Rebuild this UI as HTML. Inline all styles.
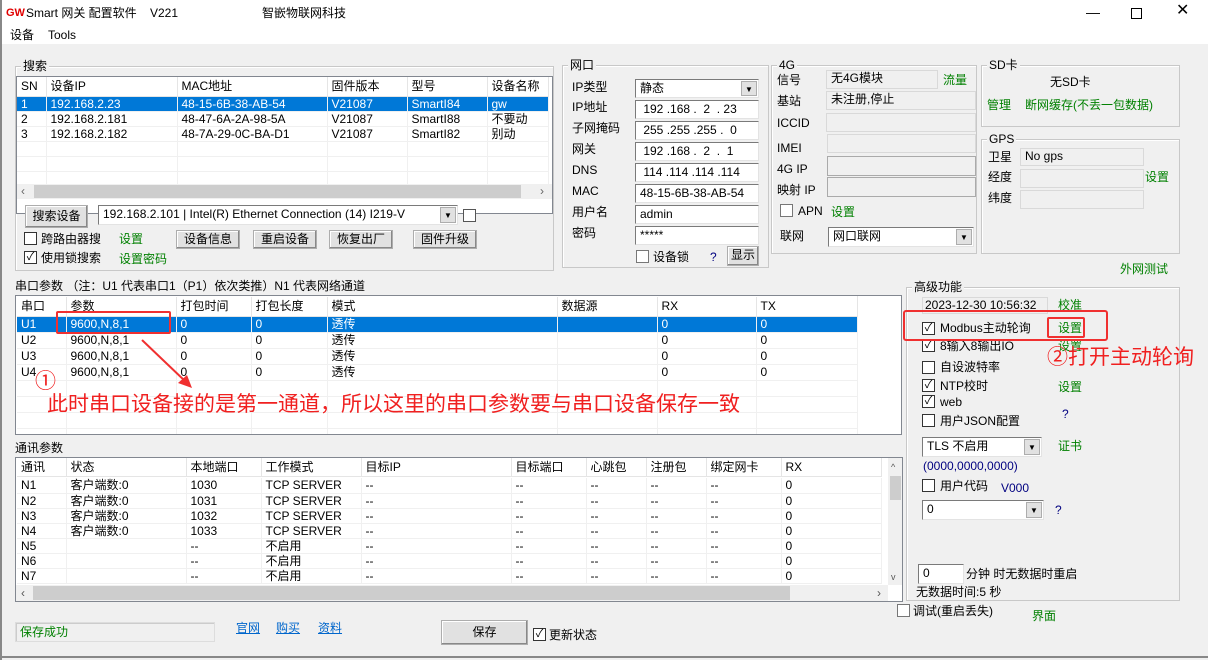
<!DOCTYPE html>
<html><head><meta charset="utf-8">
<style>
*{box-sizing:border-box;margin:0;padding:0}
body{width:1208px;height:660px;background:#f0f0f0;font:12px "Liberation Sans","Noto Sans CJK SC",sans-serif;color:#000;position:relative;overflow:hidden}
.a{position:absolute}
.t{position:absolute;line-height:14px;white-space:nowrap}
.g{color:#008000}
.grp{position:absolute;border:1px solid #c8c8c8;box-shadow:inset 1px 1px 0 #fff}
.gl{position:absolute;background:#f0f0f0;padding:0 2px;line-height:14px;top:-8px;left:5px}
.f{position:absolute;background:#fff;border:1px solid #7a7a7a;border-right-color:#e3e3e3;border-bottom-color:#e3e3e3;padding:1px 4px;line-height:15px;white-space:nowrap;overflow:hidden}
.r{position:absolute;background:#f0f0f0;border:1px solid #d9d9d9;padding:1px 4px;line-height:15px;white-space:nowrap}
.btn{position:absolute;background:#e1e1e1;border:1px solid #adadad;box-shadow:inset -1px -1px 0 #888,inset 1px 1px 0 #fff;text-align:center;line-height:17px}
.cb{position:absolute;width:13px;height:13px;background:#fff;border:1px solid #333;font-size:11px;line-height:11px;text-align:center}
.dd{position:absolute;right:1px;top:1px;bottom:1px;width:16px;background:#e1e1e1;border:1px solid #adadad;font-size:8px;text-align:center;line-height:15px}
table{position:absolute;border-collapse:collapse;table-layout:fixed}
td,th{font-weight:normal;text-align:left;padding:0 0 0 4px;white-space:nowrap;overflow:hidden;border-right:1px solid #f0f0f0;border-bottom:1px solid #f0f0f0;line-height:12px;vertical-align:middle}
th{border-right:1px solid #e5e5e5;border-bottom:1px solid #e5e5e5}
tr.s td{background:#0078d7;color:#fff}
.list{position:absolute;background:#fff;border:1px solid #828790;overflow:hidden}
.red{color:#f02020}
</style></head><body>
<div class="a" style="left:0;top:0;width:1208px;height:44px;background:#fff"></div>
<div class="a" style="left:0;top:0;width:2px;height:660px;background:#888"></div>
<div class="a" style="left:0;top:656px;width:1208px;height:2px;background:#888"></div>
<div class="t" style="left:6px;top:6px;color:#e00000;font-weight:bold;font-size:11px">GW</div>
<div class="t" style="left:26px;top:6px">Smart 网关 配置软件 &nbsp;&nbsp; V221</div>
<div class="t" style="left:262px;top:6px">智嵌物联网科技</div>
<div class="t" style="left:1086px;top:5px;font-size:14px">—</div>
<div class="a" style="left:1131px;top:8px;width:11px;height:11px;border:1px solid #000"></div>
<div class="t" style="left:1176px;top:4px;font-size:16px">✕</div>
<div class="t" style="left:10px;top:28px">设备</div>
<div class="t" style="left:48px;top:28px">Tools</div>

<div class="grp" style="left:15px;top:66px;width:539px;height:205px"><div class="gl">搜索</div></div>
<div class="list" style="left:16px;top:76px;width:537px;height:138px">
<table style="left:0;top:0;width:531px">
<colgroup><col style="width:29px"><col style="width:131px"><col style="width:150px"><col style="width:80px"><col style="width:80px"><col style="width:61px"></colgroup>
<tr style="height:19px"><th>SN</th><th>设备IP</th><th>MAC地址</th><th>固件版本</th><th>型号</th><th>设备名称</th></tr>
<tr style="height:15px" class="s"><td>1</td><td>192.168.2.23</td><td>48-15-6B-38-AB-54</td><td>V21087</td><td>SmartI84</td><td>gw</td></tr>
<tr style="height:15px"><td>2</td><td>192.168.2.181</td><td>48-47-6A-2A-98-5A</td><td>V21087</td><td>SmartI88</td><td>不要动</td></tr>
<tr style="height:15px"><td>3</td><td>192.168.2.182</td><td>48-7A-29-0C-BA-D1</td><td>V21087</td><td>SmartI82</td><td>别动</td></tr>
<tr style="height:15px"><td></td><td></td><td></td><td></td><td></td><td></td></tr>
<tr style="height:15px"><td></td><td></td><td></td><td></td><td></td><td></td></tr>
<tr style="height:15px"><td></td><td></td><td></td><td></td><td></td><td></td></tr>
</table></div>
<div class="a" style="left:17px;top:184px;width:535px;height:15px;background:#f0f0f0"></div>
<div class="a" style="left:34px;top:185px;width:487px;height:13px;background:#cdcdcd"></div>
<div class="t" style="left:21px;top:184px;color:#666">‹</div>
<div class="t" style="left:540px;top:184px;color:#666">›</div>
<div class="btn" style="left:25px;top:205px;width:63px;height:23px;line-height:21px">搜索设备</div>
<div class="f" style="left:98px;top:205px;width:360px;height:20px">192.168.2.101 | Intel(R) Ethernet Connection (14) I219-V<div class="dd">▼</div></div>
<div class="cb" style="left:463px;top:209px;border-color:#555"></div>
<div class="cb" style="left:24px;top:232px"></div><div class="t" style="left:41px;top:232px">跨路由器搜</div>
<div class="t g" style="left:119px;top:232px">设置</div>
<div class="btn" style="left:176px;top:230px;width:64px;height:19px">设备信息</div>
<div class="btn" style="left:253px;top:230px;width:64px;height:19px">重启设备</div>
<div class="btn" style="left:329px;top:230px;width:64px;height:19px">恢复出厂</div>
<div class="btn" style="left:413px;top:230px;width:64px;height:19px">固件升级</div>
<div class="cb" style="left:24px;top:251px">✓</div><div class="t" style="left:41px;top:251px">使用锁搜索</div>
<div class="t g" style="left:119px;top:252px">设置密码</div>

<div class="grp" style="left:562px;top:65px;width:207px;height:203px"><div class="gl">网口</div></div>
<div class="t" style="left:572px;top:80px">IP类型</div>
<div class="t" style="left:572px;top:100px">IP地址</div>
<div class="t" style="left:572px;top:121px">子网掩码</div>
<div class="t" style="left:572px;top:142px">网关</div>
<div class="t" style="left:572px;top:163px">DNS</div>
<div class="t" style="left:572px;top:184px">MAC</div>
<div class="t" style="left:572px;top:205px">用户名</div>
<div class="t" style="left:572px;top:226px">密码</div>
<div class="f" style="left:635px;top:79px;width:124px;height:19px">静态<div class="dd">▼</div></div>
<div class="f" style="left:635px;top:100px;width:124px;height:19px">&nbsp;192 .168 .&nbsp; 2 &nbsp;. 23</div>
<div class="f" style="left:635px;top:121px;width:124px;height:19px">&nbsp;255 .255 .255 .&nbsp; 0</div>
<div class="f" style="left:635px;top:142px;width:124px;height:19px">&nbsp;192 .168 .&nbsp; 2 &nbsp;. &nbsp;1</div>
<div class="f" style="left:635px;top:163px;width:124px;height:19px">&nbsp;114 .114 .114 .114</div>
<div class="f" style="left:635px;top:184px;width:124px;height:19px">48-15-6B-38-AB-54</div>
<div class="f" style="left:635px;top:205px;width:124px;height:19px">admin</div>
<div class="f" style="left:635px;top:226px;width:124px;height:19px">*****</div>
<div class="cb" style="left:636px;top:250px;border-color:#777"></div><div class="t" style="left:653px;top:250px">设备锁</div>
<div class="t" style="left:710px;top:250px;color:#000080">?</div>
<div class="btn" style="left:727px;top:246px;width:32px;height:20px">显示</div>

<div class="grp" style="left:771px;top:65px;width:206px;height:189px"><div class="gl">4G</div></div>
<div class="t" style="left:777px;top:73px">信号</div>
<div class="t" style="left:777px;top:94px">基站</div>
<div class="t" style="left:777px;top:116px">ICCID</div>
<div class="t" style="left:777px;top:141px">IMEI</div>
<div class="t" style="left:777px;top:162px">4G IP</div>
<div class="t" style="left:777px;top:183px">映射 IP</div>
<div class="r" style="left:826px;top:70px;width:112px;height:19px;padding-top:0">无4G模块</div>
<div class="t g" style="left:943px;top:73px">流量</div>
<div class="r" style="left:826px;top:91px;width:150px;height:19px;padding-top:0">未注册,停止</div>
<div class="r" style="left:826px;top:113px;width:150px;height:19px"></div>
<div class="r" style="left:827px;top:134px;width:149px;height:19px"></div>
<div class="r" style="left:827px;top:156px;width:149px;height:20px;border-color:#aaa"></div>
<div class="r" style="left:827px;top:177px;width:149px;height:20px;border-color:#aaa"></div>
<div class="cb" style="left:780px;top:204px;border-color:#777"></div><div class="t" style="left:798px;top:204px">APN</div>
<div class="t g" style="left:831px;top:205px">设置</div>
<div class="t" style="left:780px;top:229px">联网</div>
<div class="f" style="left:828px;top:227px;width:146px;height:20px">网口联网<div class="dd">▼</div></div>

<div class="grp" style="left:981px;top:65px;width:199px;height:62px"><div class="gl">SD卡</div></div>
<div class="t" style="left:1050px;top:75px">无SD卡</div>
<div class="t g" style="left:987px;top:98px">管理</div>
<div class="t g" style="left:1025px;top:98px">断网缓存(不丢一包数据)</div>
<div class="grp" style="left:981px;top:139px;width:199px;height:115px"><div class="gl">GPS</div></div>
<div class="t" style="left:988px;top:150px">卫星</div>
<div class="t" style="left:988px;top:170px">经度</div>
<div class="t" style="left:988px;top:191px">纬度</div>
<div class="r" style="left:1020px;top:148px;width:124px;height:18px;padding-top:0">No gps</div>
<div class="r" style="left:1020px;top:169px;width:124px;height:19px"></div>
<div class="r" style="left:1020px;top:190px;width:124px;height:19px"></div>
<div class="t g" style="left:1145px;top:170px">设置</div>
<div class="t g" style="left:1120px;top:262px">外网测试</div>

<div class="t" style="left:15px;top:279px">串口参数 （注：U1 代表串口1（P1）依次类推）N1 代表网络通道</div>
<div class="list" style="left:15px;top:295px;width:887px;height:140px">
<table style="left:1px;top:1px;width:840px">
<colgroup><col style="width:49px"><col style="width:110px"><col style="width:75px"><col style="width:76px"><col style="width:230px"><col style="width:100px"><col style="width:99px"><col style="width:101px"></colgroup>
<tr style="height:19px"><th>串口</th><th>参数</th><th>打包时间</th><th>打包长度</th><th>模式</th><th>数据源</th><th>RX</th><th>TX</th></tr>
<tr style="height:16px" class="s"><td>U1</td><td>9600,N,8,1</td><td>0</td><td>0</td><td>透传</td><td></td><td>0</td><td>0</td></tr>
<tr style="height:16px"><td>U2</td><td>9600,N,8,1</td><td>0</td><td>0</td><td>透传</td><td></td><td>0</td><td>0</td></tr>
<tr style="height:16px"><td>U3</td><td>9600,N,8,1</td><td>0</td><td>0</td><td>透传</td><td></td><td>0</td><td>0</td></tr>
<tr style="height:16px"><td>U4</td><td>9600,N,8,1</td><td>0</td><td>0</td><td>透传</td><td></td><td>0</td><td>0</td></tr>
<tr style="height:16px"><td></td><td></td><td></td><td></td><td></td><td></td><td></td><td></td></tr>
<tr style="height:16px"><td></td><td></td><td></td><td></td><td></td><td></td><td></td><td></td></tr>
<tr style="height:16px"><td></td><td></td><td></td><td></td><td></td><td></td><td></td><td></td></tr>
<tr style="height:16px"><td></td><td></td><td></td><td></td><td></td><td></td><td></td><td></td></tr>
</table></div>
<div class="a" style="left:857px;top:296px;width:1px;height:19px;background:#e5e5e5"></div>
<div class="a" style="left:56px;top:311px;width:115px;height:23px;border:2px solid #f03030;border-radius:2px"></div>
<svg class="a" style="left:130px;top:330px" width="80" height="70"><line x1="12" y1="10" x2="56" y2="52" stroke="#f03030" stroke-width="2"/><polygon points="62,58 48,53 57,45" fill="#f03030"/></svg>
<div class="t red" style="left:35px;top:371px;font-size:21px;line-height:22px">①</div>
<div class="t red" style="left:47px;top:394px;font-size:21px;line-height:22px">此时串口设备接的是第一通道，所以这里的串口参数要与串口设备保存一致</div>

<div class="t" style="left:15px;top:441px">通讯参数</div>
<div class="list" style="left:15px;top:457px;width:888px;height:145px">
<table style="left:1px;top:0;width:864px">
<colgroup><col style="width:49px"><col style="width:120px"><col style="width:75px"><col style="width:100px"><col style="width:150px"><col style="width:75px"><col style="width:60px"><col style="width:60px"><col style="width:75px"><col style="width:100px"></colgroup>
<tr style="height:18px"><th>通讯</th><th>状态</th><th>本地端口</th><th>工作模式</th><th>目标IP</th><th>目标端口</th><th>心跳包</th><th>注册包</th><th>绑定网卡</th><th>RX</th></tr>
<tr style="height:2px"><td colspan="10" style="border:0;line-height:0"></td></tr>
<tr style="height:15px"><td>N1</td><td>客户端数:0</td><td>1030</td><td>TCP SERVER</td><td>--</td><td>--</td><td>--</td><td>--</td><td>--</td><td>0</td></tr>
<tr style="height:15px"><td>N2</td><td>客户端数:0</td><td>1031</td><td>TCP SERVER</td><td>--</td><td>--</td><td>--</td><td>--</td><td>--</td><td>0</td></tr>
<tr style="height:15px"><td>N3</td><td>客户端数:0</td><td>1032</td><td>TCP SERVER</td><td>--</td><td>--</td><td>--</td><td>--</td><td>--</td><td>0</td></tr>
<tr style="height:15px"><td>N4</td><td>客户端数:0</td><td>1033</td><td>TCP SERVER</td><td>--</td><td>--</td><td>--</td><td>--</td><td>--</td><td>0</td></tr>
<tr style="height:15px"><td>N5</td><td></td><td>--</td><td>不启用</td><td>--</td><td>--</td><td>--</td><td>--</td><td>--</td><td>0</td></tr>
<tr style="height:15px"><td>N6</td><td></td><td>--</td><td>不启用</td><td>--</td><td>--</td><td>--</td><td>--</td><td>--</td><td>0</td></tr>
<tr style="height:15px"><td>N7</td><td></td><td>--</td><td>不启用</td><td>--</td><td>--</td><td>--</td><td>--</td><td>--</td><td>0</td></tr>
</table></div>
<div class="a" style="left:888px;top:458px;width:14px;height:127px;background:#f0f0f0"></div>
<div class="a" style="left:890px;top:476px;width:11px;height:24px;background:#cdcdcd"></div>
<div class="t" style="left:891px;top:460px;font-size:9px;color:#555">^</div>
<div class="t" style="left:891px;top:570px;font-size:9px;color:#555">v</div>
<div class="a" style="left:16px;top:585px;width:872px;height:16px;background:#f0f0f0"></div>
<div class="a" style="left:33px;top:586px;width:757px;height:14px;background:#cdcdcd"></div>
<div class="t" style="left:21px;top:586px;color:#555">‹</div>
<div class="t" style="left:877px;top:586px;color:#555">›</div>

<div class="r" style="left:15px;top:622px;width:200px;height:20px;color:#008000;padding-top:2px;border-color:#ddd;box-shadow:inset 1px 1px 0 #ccc">保存成功</div>
<div class="t" style="left:236px;top:621px;color:#0066cc;text-decoration:underline">官网</div>
<div class="t" style="left:276px;top:621px;color:#0066cc;text-decoration:underline">购买</div>
<div class="t" style="left:318px;top:621px;color:#0066cc;text-decoration:underline">资料</div>
<div class="btn" style="left:441px;top:620px;width:87px;height:25px;line-height:23px">保存</div>
<div class="cb" style="left:533px;top:628px">✓</div><div class="t" style="left:549px;top:628px">更新状态</div>

<div class="grp" style="left:906px;top:287px;width:274px;height:314px"><div class="gl">高级功能</div></div>
<div class="r" style="left:922px;top:297px;width:126px;height:17px;padding:0 2px;line-height:14px;overflow:hidden">2023-12-30 10:56:32</div>
<div class="t g" style="left:1058px;top:298px">校准</div>
<div class="cb" style="left:922px;top:322px">✓</div><div class="t" style="left:940px;top:321px">Modbus主动轮询</div>
<div class="t g" style="left:1058px;top:321px">设置</div>
<div class="cb" style="left:922px;top:339px">✓</div><div class="t" style="left:940px;top:339px">8输入8输出IO</div>
<div class="t g" style="left:1058px;top:339px">设置</div>
<div class="cb" style="left:922px;top:361px"></div><div class="t" style="left:940px;top:360px">自设波特率</div>
<div class="cb" style="left:922px;top:379px">✓</div><div class="t" style="left:940px;top:379px">NTP校时</div>
<div class="t g" style="left:1058px;top:380px">设置</div>
<div class="cb" style="left:922px;top:395px">✓</div><div class="t" style="left:940px;top:395px">web</div>
<div class="cb" style="left:922px;top:414px"></div><div class="t" style="left:940px;top:414px">用户JSON配置</div>
<div class="t" style="left:1062px;top:407px;color:#000080">?</div>
<div class="f" style="left:922px;top:437px;width:120px;height:20px">TLS 不启用<div class="dd">▼</div></div>
<div class="t g" style="left:1058px;top:439px">证书</div>
<div class="t" style="left:923px;top:459px;color:#000080">(0000,0000,0000)</div>
<div class="cb" style="left:922px;top:479px"></div><div class="t" style="left:940px;top:479px">用户代码</div>
<div class="t" style="left:1001px;top:481px;color:#000080">V000</div>
<div class="f" style="left:922px;top:500px;width:122px;height:20px">0<div class="dd">▼</div></div>
<div class="t" style="left:1055px;top:503px;color:#000080">?</div>
<div class="f" style="left:918px;top:564px;width:46px;height:20px">0</div>
<div class="t" style="left:966px;top:567px">分钟 时无数据时重启</div>
<div class="t" style="left:916px;top:585px">无数据时间:5 秒</div>
<div class="cb" style="left:897px;top:604px;border-color:#777"></div><div class="t" style="left:913px;top:604px">调试(重启丢失)</div>
<div class="t g" style="left:1032px;top:609px">界面</div>
<div class="a" style="left:903px;top:310px;width:205px;height:31px;border:2px solid #f03030;border-radius:3px"></div>
<div class="a" style="left:1047px;top:317px;width:38px;height:21px;border:2px solid #f03030;border-radius:2px"></div>
<div class="t red" style="left:1047px;top:347px;font-size:21px;line-height:22px">②打开主动轮询</div>
</body></html>
